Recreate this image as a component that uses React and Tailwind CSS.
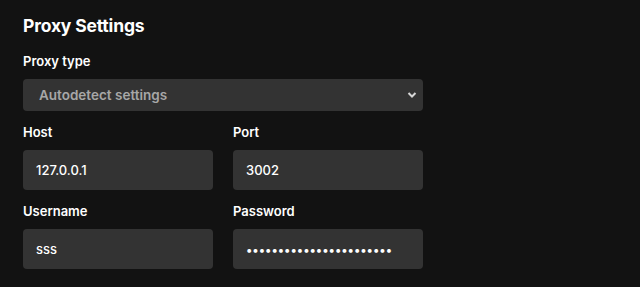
export default function App() {
  return (
    <div className="w-[640px] h-[287px] bg-[#121212] px-[23px] pt-[14px] font-['Inter',sans-serif] text-white overflow-hidden">
      <h1 className="text-[17.5px] font-bold leading-[24px] tracking-[-0.01em]">Proxy Settings</h1>
      <div className="w-[400px] mt-[15px]">
        <label className="block text-[13px] font-semibold leading-[16px] mb-[10px]">Proxy type</label>
        <div className="relative">
          <select
            defaultValue="auto"
            className="w-full h-[32px] appearance-none rounded-[4px] bg-[#333333] pl-4 pr-8 text-[13.5px] font-semibold text-[#a7a7a7] outline-none"
          >
            <option value="auto">Autodetect settings</option>
            <option value="none">No proxy</option>
            <option value="http">HTTP</option>
          </select>
          <svg className="pointer-events-none absolute right-[6px] top-[12px]" width="10" height="8" viewBox="0 0 10 8" fill="none">
            <path d="M1.5 2 L5 5.5 L8.5 2" stroke="#d6d6d6" strokeWidth="2" />
          </svg>
        </div>
        <div className="grid grid-cols-2 gap-x-5 mt-[13px]">
          <div>
            <label className="block text-[13px] font-semibold leading-[16px] mb-[10px]">Host</label>
            <input defaultValue="127.0.0.1" className="w-full h-[40px] rounded-[4px] bg-[#333333] px-[13px] text-[13px] font-medium text-white outline-none" />
          </div>
          <div>
            <label className="block text-[13px] font-semibold leading-[16px] mb-[10px]">Port</label>
            <input defaultValue="3002" className="w-full h-[40px] rounded-[4px] bg-[#333333] px-[13px] text-[13px] font-medium text-white outline-none" />
          </div>
          <div className="mt-[13px]">
            <label className="block text-[13px] font-semibold leading-[16px] mb-[10px]">Username</label>
            <input defaultValue="sss" className="w-full h-[40px] rounded-[4px] bg-[#333333] px-[13px] text-[13px] font-medium text-white outline-none" />
          </div>
          <div className="mt-[13px]">
            <label className="block text-[13px] font-semibold leading-[16px] mb-[10px]">Password</label>
            <input type="password" defaultValue="sssssssssssssssssssssss" className="w-full h-[40px] rounded-[4px] bg-[#333333] px-[13px] text-[12px] tracking-[-0.05px] font-medium text-white outline-none" />
          </div>
        </div>
      </div>
    </div>
  )
}
